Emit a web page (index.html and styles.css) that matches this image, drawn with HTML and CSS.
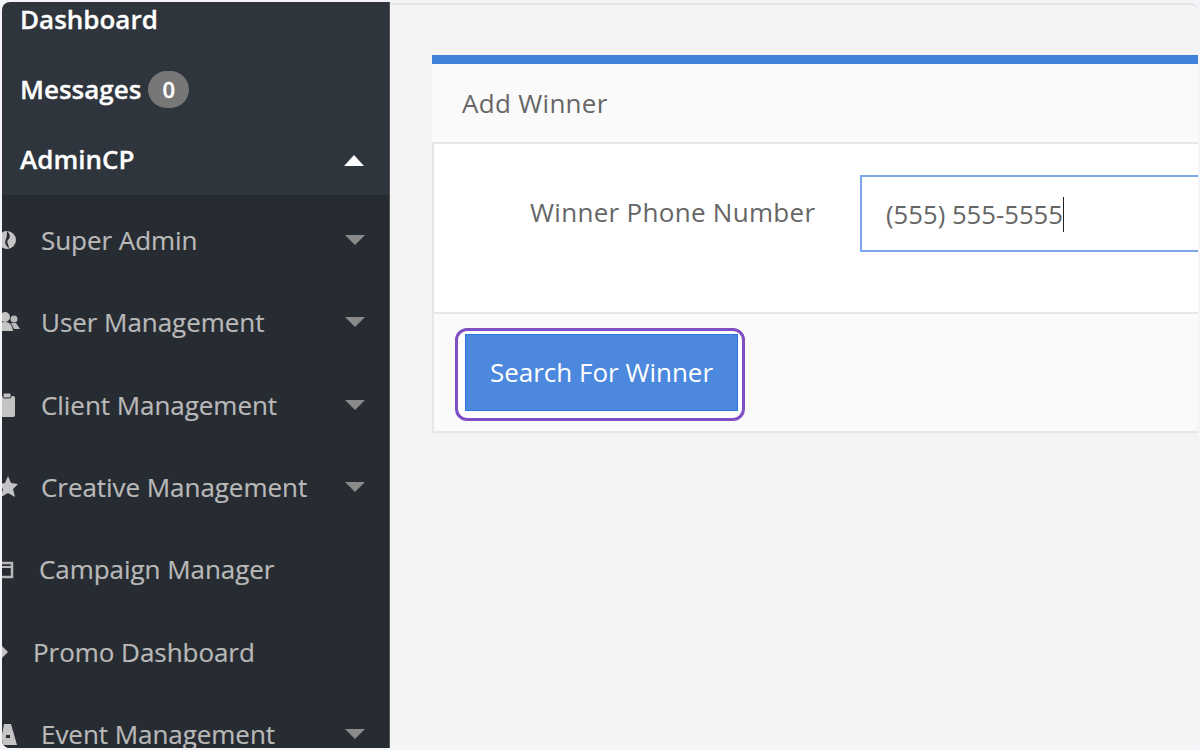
FILE: index.html
```html
<!DOCTYPE html>
<html>
<head>
  <title>Add Winner</title>
  <link rel="stylesheet" href="styles.css">
</head>
<body>
  <div class="frame">
    <aside class="sidebar">
      <ul class="menu">
        <li class="menu-item">Dashboard</li>
        <li class="menu-item">Messages <span class="badge">0</span></li>
        <li class="menu-item">AdminCP <span class="caret caret-up"></span></li>
      </ul>
      <ul class="submenu">
        <li class="sub-item">
          <svg class="icon" viewBox="0 0 24 24"><circle cx="5" cy="12" r="9" fill="#c4c4c4"/><path d="M5 3c3 3 4 6 1 9-2 2 1 5 1 8-3-2-5-5-3-9 1-3 1-5 1-8z" fill="#272b32"/></svg>
          <span class="sub-label">Super Admin</span><span class="caret"></span>
        </li>
        <li class="sub-item">
          <svg class="icon" viewBox="0 0 24 24"><path d="M-4 21c0-7 3-9 7-9 5 0 7 3 8 9z" fill="#c4c4c4"/><circle cx="3" cy="7" r="5" fill="#c4c4c4"/><circle cx="12" cy="9" r="3.5" fill="#b9b9b9"/><path d="M9 13h5l4 6h-6z" fill="#b9b9b9"/></svg>
          <span class="sub-label">User Management</span><span class="caret"></span>
        </li>
        <li class="sub-item">
          <svg class="icon" viewBox="0 0 24 24"><rect x="-4" y="3" width="17" height="21" rx="2" fill="#c4c4c4"/><rect x="1" y="0" width="8" height="5" rx="1" fill="#c4c4c4" stroke="#272b32"/></svg>
          <span class="sub-label">Client Management</span><span class="caret"></span>
        </li>
        <li class="sub-item">
          <svg class="icon" viewBox="0 0 24 24"><path d="M6 1l3 7 7 1-5 5 2 8-7-4-7 4 2-8-5-5 7-1z" fill="#c4c4c4"/></svg>
          <span class="sub-label">Creative Management</span><span class="caret"></span>
        </li>
        <li class="sub-item tight-a">
          <svg class="icon" viewBox="0 0 24 24"><path d="M-2 6h12v14h-12z" fill="none" stroke="#b9b9b9" stroke-width="2.5"/><path d="M-2 10h12" stroke="#b9b9b9" stroke-width="2"/></svg>
          <span class="sub-label">Campaign Manager</span>
        </li>
        <li class="sub-item tight-b">
          <svg class="icon" viewBox="0 0 24 24"><path d="M0 6l6 6-6 6z" fill="#c4c4c4"/></svg>
          <span class="sub-label">Promo Dashboard</span>
        </li>
        <li class="sub-item">
          <svg class="icon" viewBox="0 0 24 24"><path d="M2 2h7l6 21H-2z" fill="#c4c4c4"/><path d="M4 13h4v3H4z" fill="#272b32"/></svg>
          <span class="sub-label">Event Management</span><span class="caret"></span>
        </li>
      </ul>
    </aside>

    <main class="content">
      <section class="card">
        <h1 class="card-title">Add Winner</h1>
        <div class="card-body">
          <label class="field-label">Winner Phone Number</label>
          <div class="field-input">(555) 555-5555<span class="cursor"></span></div>
        </div>
        <div class="card-footer">
          <div class="highlight">
            <button class="btn">Search For Winner</button>
          </div>
        </div>
      </section>
    </main>
  </div>
</body>
</html>
```

FILE: styles.css
```css
html, body {
  margin: 0;
  padding: 0;
  height: 100%;
  background: #f5f5f9;
}

body {
  font-family: "Open Sans", sans-serif;
  overflow: hidden;
}

ul {
  list-style: none;
  margin: 0;
  padding: 0;
}

.frame {
  display: flex;
  height: 750px;
  box-sizing: border-box;
  padding: 2px;
  overflow: hidden;
}

/* Sidebar */
.sidebar {
  width: 387px;
  flex: none;
  background: #2f353d;
  border-radius: 8px 0 0 8px;
  overflow: hidden;
  border-right: 1px solid #55585c;
}

.menu {
  margin-top: -18px;
  height: 211px;
}

.menu-item {
  display: flex;
  align-items: center;
  height: 70px;
  padding: 0 25px 0 18px;
  font-size: 26px;
  font-weight: 600;
  color: #fff;
  -webkit-text-stroke: 0.3px #fff;
}

.menu-item .caret {
  margin-left: auto;
}

.badge {
  display: inline-flex;
  align-items: center;
  justify-content: center;
  width: 41px;
  height: 37px;
  margin-left: 7px;
  border-radius: 19px;
  background: #777;
  font-size: 22px;
}

.submenu {
  background: #272b32;
  padding-top: 4px;
  height: 560px;
}

.sub-item {
  display: flex;
  align-items: center;
  height: 82.3px;
  padding: 0 24px 0 0;
  font-size: 26px;
  letter-spacing: -0.05px;
  color: #b9b9b9;
  -webkit-text-stroke: 0.2px #b9b9b9;
}

.icon {
  width: 24px;
  height: 24px;
  margin-right: 15px;
  flex: none;
}

.tight-a .icon {
  margin-right: 13px;
}

.tight-b .icon {
  margin-right: 7px;
}

.caret {
  width: 0;
  height: 0;
  margin-left: auto;
  border-left: 10px solid transparent;
  border-right: 10px solid transparent;
  border-top: 10px solid #8a8a8a;
}

.caret-up {
  margin-top: 3px;
  border-top: 0;
  border-bottom: 11px solid #fff;
}

/* Content */
.content {
  flex: 1;
  min-width: 0;
  margin-top: 1px;
  background: #f4f4f4;
  border-top: 2px solid #e6e6e6;
  border-radius: 0 8px 8px 0;
  padding: 50px 0 0 42px;
  overflow: hidden;
}

.card {
  width: 800px;
  border-left: 2px solid #e6e6e6;
  border-bottom: 2px solid #e6e6e6;
  background: #fff;
}

.card-title {
  margin: 0 0 0 -2px;
  height: 78px;
  display: flex;
  align-items: center;
  padding-left: 30px;
  background: #fafafa;
  border-top: 9px solid #3f82dc;
  border-bottom: 2px solid #e6e6e6;
  font-size: 26px;
  font-weight: 400;
  letter-spacing: 0.3px;
  color: #666;
}

.card-body {
  display: flex;
  align-items: flex-start;
  height: 168px;
  box-sizing: border-box;
  padding: 31px 0 0 96px;
}

.field-label {
  width: 330px;
  flex: none;
  padding-top: 19px;
  font-size: 26px;
  letter-spacing: 0.3px;
  color: #666;
}

.field-input {
  display: flex;
  align-items: center;
  width: 400px;
  height: 77px;
  box-sizing: border-box;
  padding: 2px 0 0 24px;
  border: 2px solid #7ba6e8;
  font-size: 25.7px;
  color: #666;
}

.cursor {
  width: 1px;
  height: 35px;
  background: #222;
}

.card-footer {
  background: #fafafa;
  border-top: 2px solid #e6e6e6;
  padding: 14px 0 10px 21px;
}

.highlight {
  display: inline-block;
  padding: 3px 4px 7px 7px;
  border: 3px solid #7f4fc4;
  border-radius: 12px;
  background: #fff;
}

.btn {
  display: block;
  width: 273px;
  height: 77px;
  padding: 0 0 2px;
  border: 1px solid #2a7ae0;
  background: #4c88dd;
  color: #fff;
  font-family: inherit;
  font-size: 26px;
}
```
